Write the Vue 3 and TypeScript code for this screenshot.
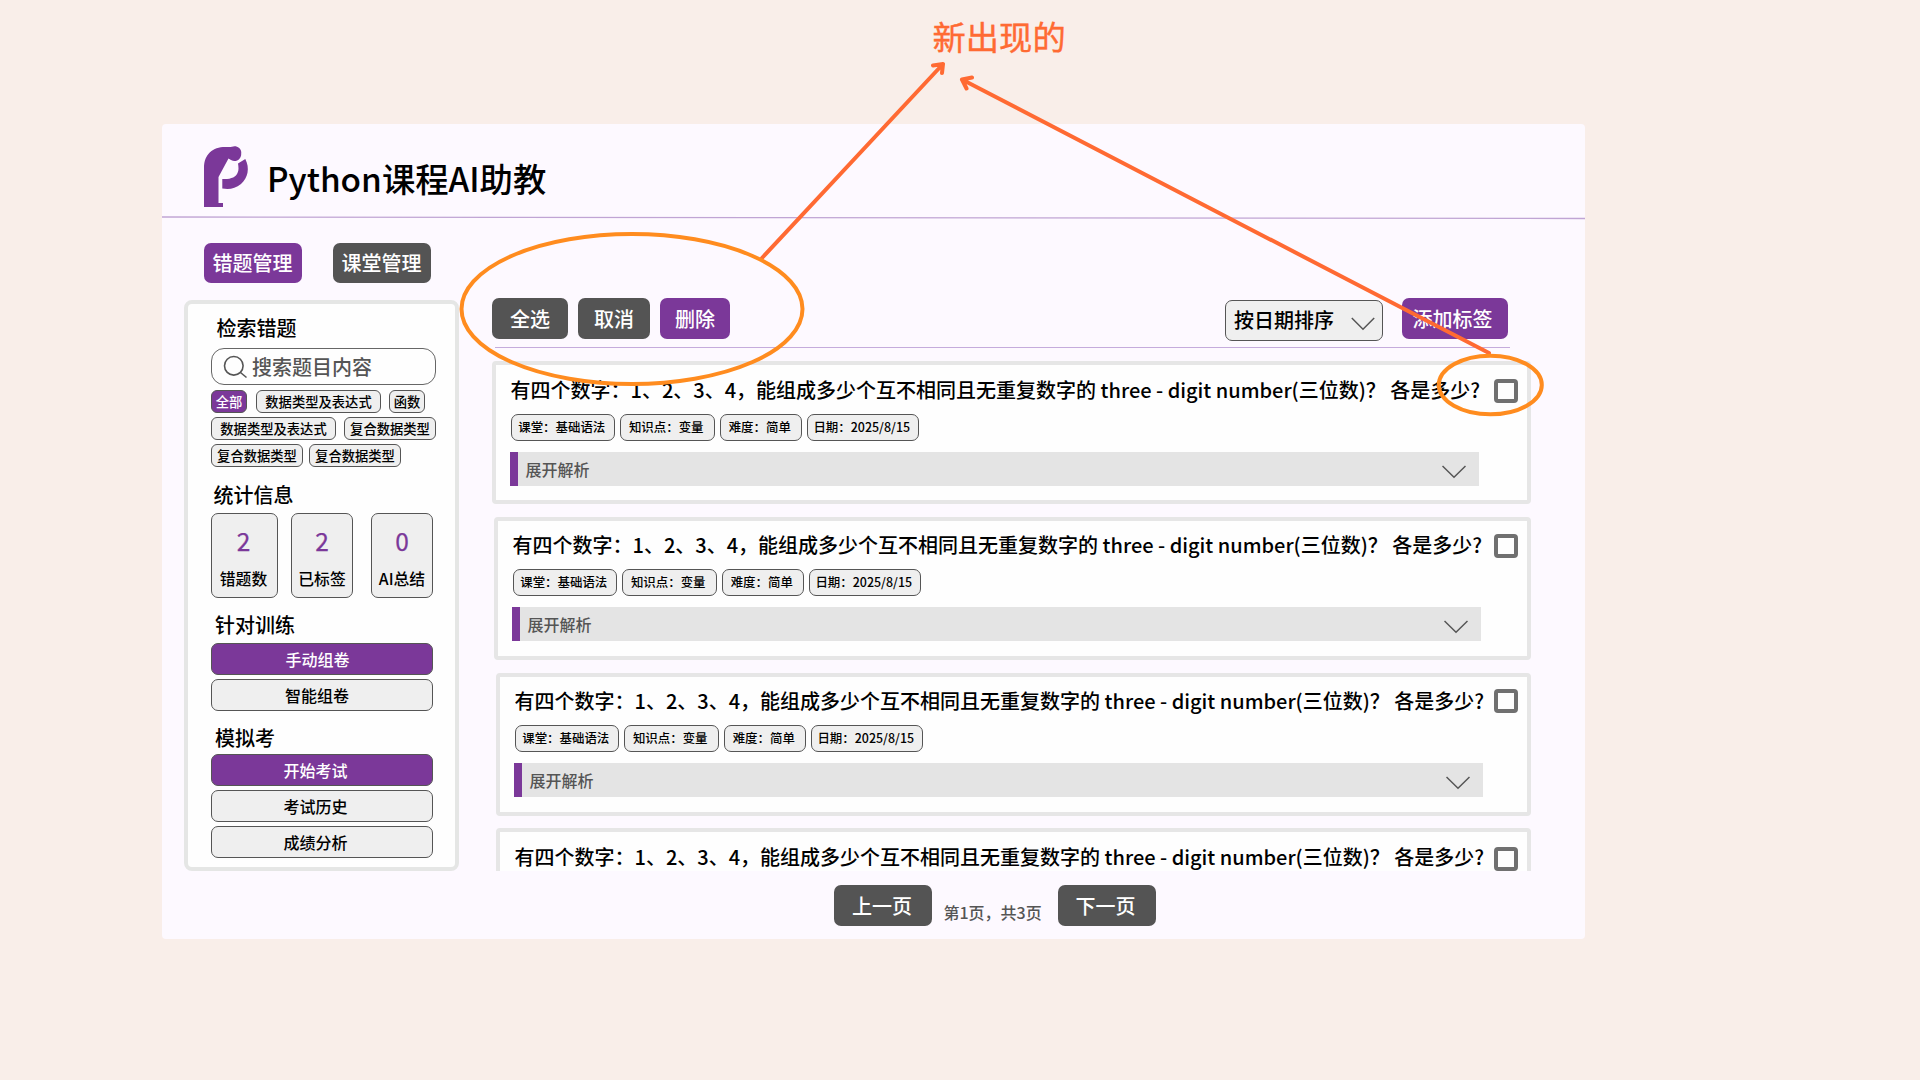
<script setup lang="ts">
interface Tag { label: string; width: number; gap: number; active?: boolean }
interface Stat { value: number; label: string; width: number; gap: number }
interface Action { label: string; primary?: boolean; shift: number }
interface Card { indent: number; gap: number; padTop: number; checkTop: number; peek?: boolean }

const filterRows: Tag[][] = [
  [
    { label: '全部', width: 36, gap: 0, active: true },
    { label: '数据类型及表达式', width: 125, gap: 9 },
    { label: '函数', width: 36, gap: 8 },
  ],
  [
    { label: '数据类型及表达式', width: 125, gap: 0 },
    { label: '复合数据类型', width: 92, gap: 8 },
  ],
  [
    { label: '复合数据类型', width: 92, gap: 0 },
    { label: '复合数据类型', width: 92, gap: 6 },
  ],
]

const stats: Stat[] = [
  { value: 2, label: '错题数', width: 67, gap: 0 },
  { value: 2, label: '已标签', width: 62, gap: 13 },
  { value: 0, label: 'AI总结', width: 62, gap: 18 },
]

const training: Action[] = [
  { label: '手动组卷', primary: true, shift: 9 },
  { label: '智能组卷', shift: 10 },
]

const exams: Action[] = [
  { label: '开始考试', primary: true, shift: 13 },
  { label: '考试历史', shift: 13 },
  { label: '成绩分析', shift: 13 },
]

const question = '有四个数字：1、2、3、4，能组成多少个互不相同且无重复数字的 three - digit number(三位数)？ 各是多少?'

const meta = [
  { label: '课堂：基础语法', width: 104 },
  { label: '知识点：变量', width: 95 },
  { label: '难度：简单', width: 82 },
  { label: '日期：2025/8/15', width: 112 },
]

const cards: Card[] = [
  { indent: 0, gap: 0, padTop: 10, checkTop: 14 },
  { indent: 2, gap: 13, padTop: 9, checkTop: 13 },
  { indent: 4, gap: 13, padTop: 9, checkTop: 12 },
  { indent: 4, gap: 12, padTop: 10, checkTop: 15, peek: true },
]
</script>

<template>
  <div class="board">
    <main class="panel">
      <header class="header">
        <svg class="logo" viewBox="0 0 46 62" width="46" height="62">
          <path d="M0 61V22C0 8 9 1 21 1C24 1 26 1.200 28 0.800C32 -1 38 2 37.200 7.500C37.500 13 32 17 27 14L24.500 12.500L14.500 31V57H19V61Z" fill="#7b3899" />
          <path d="M41.300 13C46 22 44 32 37 38C31 43 25 43.500 18.300 42.500V33C27 33.500 32 31 33.500 27C35 24 34.500 21 34 17.500Z" fill="#7b3899" />
        </svg>
        <h1>Python课程AI助教</h1>
      </header>
      <svg class="header-rule" width="1423" height="4" viewBox="0 0 1423 4">
        <line x1="0" y1="1" x2="1423" y2="2.500" stroke="#c0a5d4" stroke-width="1.300" />
      </svg>

      <div class="body">
        <div class="left">
          <nav class="tabs">
            <button class="btn purple tab">错题管理</button>
            <button class="btn tab">课堂管理</button>
          </nav>

          <aside class="sidebar">
            <h2 class="h-search">检索错题</h2>
            <div class="search">
              <svg width="24" height="24" viewBox="0 0 24 24" fill="none" stroke="#555" stroke-width="1.600">
                <circle cx="10.800" cy="10.800" r="9.300" />
                <path d="M17.500 17.500L23.500 22.500" />
              </svg>
              <span>搜索题目内容</span>
            </div>
            <div class="filters">
              <div v-for="(row, i) in filterRows" :key="i" class="filter-row">
                <span
                  v-for="(tag, j) in row"
                  :key="j"
                  class="filter"
                  :class="{ active: tag.active }"
                  :style="{ width: tag.width + 'px', marginLeft: tag.gap + 'px' }"
                >{{ tag.label }}</span>
              </div>
            </div>

            <h2 class="h-stats">统计信息</h2>
            <div class="stats">
              <div
                v-for="stat in stats"
                :key="stat.label"
                class="stat"
                :style="{ width: stat.width + 'px', marginLeft: stat.gap + 'px' }"
              >
                <b>{{ stat.value }}</b>
                <span>{{ stat.label }}</span>
              </div>
            </div>

            <h2 class="h-train">针对训练</h2>
            <div class="actions">
              <button
                v-for="a in training"
                :key="a.label"
                class="action"
                :class="{ active: a.primary }"
                :style="{ paddingRight: a.shift + 'px' }"
              >{{ a.label }}</button>
            </div>

            <h2 class="h-exam">模拟考</h2>
            <div class="actions">
              <button
                v-for="a in exams"
                :key="a.label"
                class="action"
                :class="{ active: a.primary }"
                :style="{ paddingRight: a.shift + 'px' }"
              >{{ a.label }}</button>
            </div>
          </aside>
        </div>

        <section class="content">
          <div class="toolbar">
            <button class="btn select-all">全选</button>
            <button class="btn cancel">取消</button>
            <button class="btn purple remove">删除</button>
            <div class="sort">
              <span>按日期排序</span>
              <svg width="24" height="14" viewBox="0 0 24 14" fill="none" stroke="#555" stroke-width="1.500">
                <path d="M0.800 1L12 12.300L23.200 1" />
              </svg>
            </div>
            <button class="btn purple add">添加标签</button>
          </div>
          <div class="rule"></div>

          <div class="list">
            <article
              v-for="(card, i) in cards"
              :key="i"
              class="card"
              :style="{ marginLeft: card.indent + 'px', marginTop: card.gap + 'px' }"
            >
              <div class="card-main" :style="{ paddingTop: card.padTop + 'px' }">
                <p class="question">{{ question }}</p>
                <template v-if="!card.peek">
                  <div class="meta">
                    <span v-for="m in meta" :key="m.label" :style="{ width: m.width + 'px' }">{{ m.label }}</span>
                  </div>
                  <div class="expand">
                    <span>展开解析</span>
                    <svg width="24" height="14" viewBox="0 0 24 14" fill="none" stroke="#555" stroke-width="1.500">
                      <path d="M0.500 1L12 12.300L23.500 1" />
                    </svg>
                  </div>
                </template>
              </div>
              <i class="check" :style="{ marginTop: card.checkTop + 'px' }"></i>
            </article>
          </div>

          <footer class="pager">
            <button class="btn page">上一页</button>
            <span>第1页，共3页</span>
            <button class="btn page">下一页</button>
          </footer>
        </section>
      </div>
    </main>

    <div class="note">新出现的</div>
    <svg class="marks" width="1920" height="1080" viewBox="0 0 1920 1080" fill="none" stroke-width="4">
      <g stroke="#ff6a33" stroke-linecap="round" stroke-linejoin="round">
        <path d="M762 258L943 64M933 65.500L943 64L942 73" />
        <path d="M1489 353L962 79.500M972 77.500L962 79.500L966.500 88.500" />
      </g>
      <g stroke="#ff8c1f">
        <ellipse cx="632" cy="309" rx="170.500" ry="75" />
        <ellipse cx="1490.300" cy="385" rx="51.500" ry="29.300" />
      </g>
    </svg>
  </div>
</template>

<style>
body {
  margin: 0;
  background: #f9eee9;
}
</style>

<style scoped>
.board {
  position: relative;
  box-sizing: border-box;
  width: 1920px;
  height: 1080px;
  padding: 124px 0 0 162px;
  overflow: hidden;
  background: #f9eee9;
  color: #000;
  font-family: "Noto Sans CJK SC", sans-serif;
  font-weight: 500;
}
.board * { box-sizing: border-box; }
.panel {
  width: 1423px;
  height: 815px;
  border-radius: 4px;
  background: #fdf9ff;
}
.header {
  display: flex;
  height: 92px;
  padding: 22px 0 0 42px;
}
.logo { flex: none; }
h1 {
  margin: 8px 0 0 17px;
  font-size: 33.330px;
  font-weight: 500;
  line-height: 48px;
  white-space: nowrap;
}
.header-rule { display: block; }
.body { display: flex; }
button {
  font: inherit;
  padding: 0;
  border: 0;
}
.btn {
  flex: none;
  height: 41px;
  border-radius: 7px;
  background: #545454;
  color: #fff;
  font-size: 20px;
  line-height: 41px;
  text-align: center;
}
.purple { background: #7b3899; }
.left {
  width: 297px;
  padding: 23px 0 0 22px;
}
.tabs {
  display: flex;
  gap: 31px;
  padding-left: 20px;
}
.tab {
  width: 98px;
  height: 40px;
  padding-right: 1px;
  line-height: 40px;
}
.sidebar {
  width: 275px;
  height: 571px;
  margin-top: 17px;
  padding: 12px 0 0 23px;
  border: 4px solid #e5e6e5;
  border-radius: 8px;
  background: #fefefe;
}
h2 {
  margin: 0;
  font-size: 20px;
  font-weight: 500;
  line-height: 24px;
}
.h-search { padding-left: 5.500px; }
.search {
  display: flex;
  align-items: center;
  width: 225px;
  height: 37px;
  margin-top: 8px;
  padding-left: 11px;
  border: 1px solid #666;
  border-radius: 13px;
  color: #555;
  font-size: 20px;
  line-height: 35px;
}
.search span { margin: -1px 0 0 5px; }
.filters {
  display: flex;
  flex-direction: column;
  gap: 4px;
  margin-top: 5px;
}
.filter-row { display: flex; }
.filter {
  height: 23px;
  border: 1px solid #555;
  border-radius: 6px;
  background: #efefef;
  font-size: 13.300px;
  line-height: 22px;
  text-align: center;
  white-space: nowrap;
}
.active { background: #7b3899; color: #fff; }
.h-stats { margin-top: 16px; padding-left: 2.500px; }
.stats { display: flex; margin-top: 6px; }
.stat {
  display: flex;
  flex-direction: column;
  align-items: center;
  height: 85px;
  padding: 11px 2px 0 0;
  border: 1px solid #555;
  border-radius: 7px;
  background: #efefef;
  font-size: 15.800px;
  white-space: nowrap;
}
.stat + .stat { padding-right: 0; }
.stat b {
  color: #7b3899;
  font-size: 24.500px;
  font-weight: 400;
  line-height: 32px;
  -webkit-text-stroke: 0.250px #7b3899;
}
.stat span { margin-top: 10px; line-height: 24px; }
.h-train { margin-top: 15px; padding-left: 4px; }
.h-exam { margin-top: 15px; padding-left: 4px; }
.actions {
  display: flex;
  flex-direction: column;
  gap: 4px;
  margin-top: 6px;
}
.h-exam + .actions { margin-top: 4px; }
.action {
  width: 222px;
  height: 32px;
  border: 1px solid #555;
  border-radius: 7px;
  background: #efefef;
  color: #000;
  font-size: 16px;
  line-height: 30px;
  text-align: center;
}
.action.active { background: #7b3899; color: #fff; }

.content {
  width: 1072px;
  padding: 78px 0 0 33px;
}
.toolbar { display: flex; height: 43px; }
.select-all { width: 76px; }
.cancel { width: 72px; margin-left: 10px; }
.remove { width: 70px; margin-left: 10px; }
.sort {
  display: flex;
  align-items: center;
  width: 158px;
  height: 41px;
  margin: 2px 0 0 495px;
  padding: 0 7px 0 8px;
  justify-content: space-between;
  border: 1px solid #555;
  border-radius: 7px;
  background: #efefef;
  font-size: 20px;
  line-height: 39px;
}
.sort span { margin-top: -2px; }
.sort svg { margin-top: 7px; }
.add { width: 106px; margin-left: 19px; padding-right: 5px; }
.rule {
  width: 1015px;
  height: 1px;
  margin: 6px 0 0 3px;
  background: #c5acdc;
}
.list {
  height: 510px;
  margin-top: 13px;
  overflow: hidden;
}
.card {
  display: flex;
  justify-content: space-between;
  height: 143px;
  border: 4px solid #e6e6e6;
  border-radius: 4px;
  background: #fefefe;
}
.card-main { width: 984px; padding-left: 14px; }
.question {
  margin: 0 0 0 0.500px;
  font-size: 20px;
  line-height: 30px;
  white-space: nowrap;
}
.meta {
  display: flex;
  gap: 5px;
  margin: 9px 0 0 0.500px;
}
.meta span {
  height: 27px;
  padding-right: 1.500px;
  border: 1px solid #555;
  border-radius: 7px;
  background: #efefef;
  font-size: 12.450px;
  line-height: 25px;
  text-align: center;
  white-space: nowrap;
}
.expand {
  display: flex;
  align-items: center;
  justify-content: space-between;
  width: 969px;
  height: 34px;
  margin-top: 11px;
  padding: 0 13.500px 0 7.500px;
  border-left: 8px solid #7b3899;
  background: #e4e4e4;
  color: #555;
  font-size: 16px;
}
.expand svg { margin-top: 5px; }
.check {
  flex: none;
  width: 24px;
  height: 24px;
  margin-right: 9px;
  border: 4px solid #707070;
  border-radius: 4px;
}
.pager {
  display: flex;
  margin: 14.400px 0 0 342px;
}
.page { width: 98px; padding-right: 2px; }
.pager span {
  margin: 14px 0 0 11.500px;
  width: 114px;
  color: #555;
  font-size: 16px;
  line-height: 26px;
}
.note {
  position: absolute;
  left: 932.500px;
  top: 12px;
  color: #ff6a33;
  font-size: 33.300px;
  font-weight: 400;
  line-height: 48px;
  white-space: nowrap;
  -webkit-text-stroke: 0.400px #ff6a33;
}
.marks {
  position: absolute;
  left: 0;
  top: 0;
}
</style>
